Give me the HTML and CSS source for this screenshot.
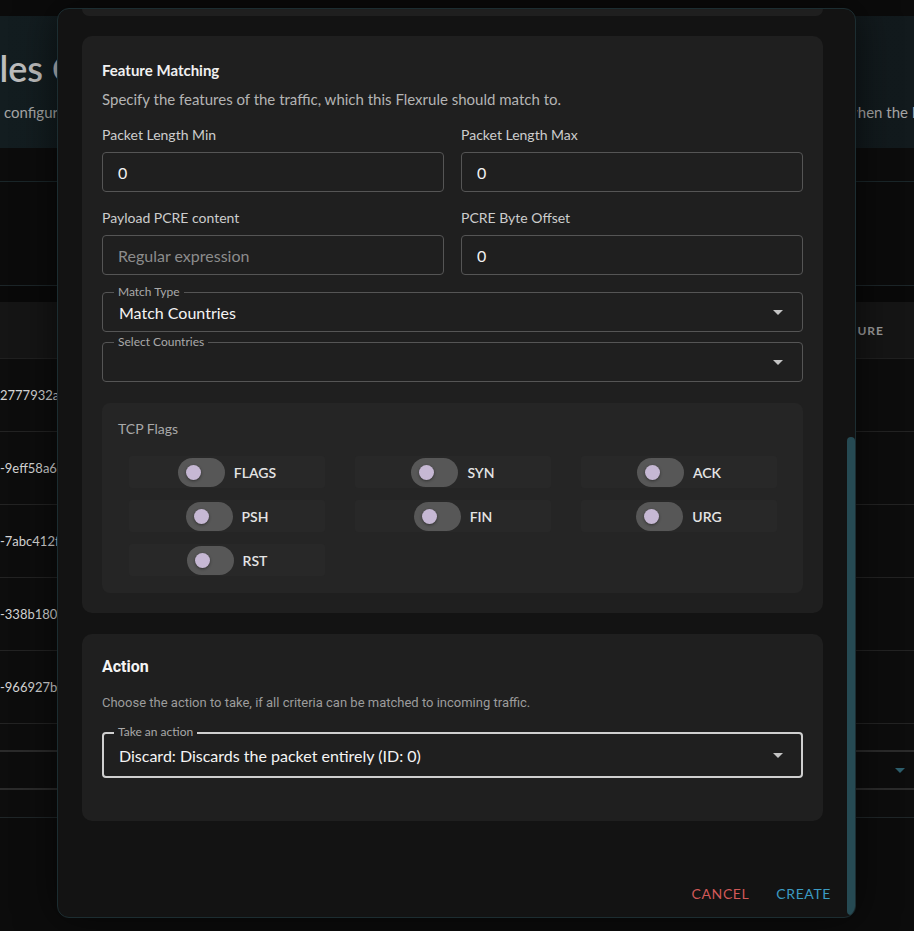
FILE: index.html
```html
<!DOCTYPE html>
<html lang="en">
<head>
<meta charset="utf-8">
<title>Create Flexrule</title>
<link rel="stylesheet" href="styles.css">
</head>
<body>
<div class="page">
  <div class="topgap"></div>
  <header class="banner">
    <h1 class="banner-title"><span class="banner-title-text">Flexrules Configuration</span></h1>
    <div class="banner-sub">
      <span class="sub-left">configure which traffic the Flexrules should match</span>
      <span class="sub-right"><span class="sub-right-text">when the Flexrule is triggered</span></span>
    </div>
  </header>
  <div class="band"></div>
  <div class="toolbar"></div>
  <div class="table-gap"></div>
  <div class="table-head"><span class="th-clip"><span class="th">FEATURE</span></span></div>
  <div class="trow"><span class="tid">2777932a-41c8-9e2f</span></div>
  <div class="trow"><span class="tid">-9eff58a6-77d1-40ab</span></div>
  <div class="trow"><span class="tid">-7abc412f-09e3-4c1d</span></div>
  <div class="trow"><span class="tid">-338b180c-5a2e-4f90</span></div>
  <div class="trow"><span class="tid">-966927b4-c3d8-41e7</span></div>
  <div class="tfoot">
    <div class="tfoot-top"></div>
    <div class="tfoot-select"><svg class="tcaret" viewBox="0 0 24 24"><path d="M7 10l5 5 5-5z"/></svg></div>
    <div class="tfoot-bottom"></div>
  </div>
</div>

<div class="dialog">
  <div class="dialog-content">
    <div class="card card-stub"></div>

    <section class="card feature">
      <h2 class="card-title">Feature Matching</h2>
      <p class="card-desc">Specify the features of the traffic, which this Flexrule should match to.</p>

      <div class="field-grid">
        <div class="field">
          <div class="field-label">Packet Length Min</div>
          <div class="input">0</div>
        </div>
        <div class="field">
          <div class="field-label">Packet Length Max</div>
          <div class="input">0</div>
        </div>
        <div class="field">
          <div class="field-label">Payload PCRE content</div>
          <div class="input placeholder">Regular expression</div>
        </div>
        <div class="field">
          <div class="field-label">PCRE Byte Offset</div>
          <div class="input">0</div>
        </div>
      </div>

      <div class="select select-first">
        <span class="legend">Match Type</span>
        <span class="select-value">Match Countries</span>
        <svg class="caret" viewBox="0 0 24 24"><path d="M7 10l5 5 5-5z"/></svg>
      </div>
      <div class="select select-next">
        <span class="legend">Select Countries</span>
        <span class="select-value"></span>
        <svg class="caret" viewBox="0 0 24 24"><path d="M7 10l5 5 5-5z"/></svg>
      </div>

      <div class="flags">
        <div class="flags-title">TCP Flags</div>
        <div class="flags-grid">
          <div class="flag-cell"><span class="switch"><span class="thumb"></span></span><span class="flag-label">FLAGS</span></div>
          <div class="flag-cell"><span class="switch"><span class="thumb"></span></span><span class="flag-label">SYN</span></div>
          <div class="flag-cell"><span class="switch"><span class="thumb"></span></span><span class="flag-label">ACK</span></div>
          <div class="flag-cell"><span class="switch"><span class="thumb"></span></span><span class="flag-label">PSH</span></div>
          <div class="flag-cell"><span class="switch"><span class="thumb"></span></span><span class="flag-label">FIN</span></div>
          <div class="flag-cell"><span class="switch"><span class="thumb"></span></span><span class="flag-label">URG</span></div>
          <div class="flag-cell"><span class="switch"><span class="thumb"></span></span><span class="flag-label">RST</span></div>
        </div>
      </div>
    </section>

    <section class="card action">
      <h2 class="action-title">Action</h2>
      <p class="action-desc">Choose the action to take, if all criteria can be matched to incoming traffic.</p>
      <div class="select select-focus">
        <span class="legend">Take an action</span>
        <span class="select-value">Discard: Discards the packet entirely (ID: 0)</span>
        <svg class="caret" viewBox="0 0 24 24"><path d="M7 10l5 5 5-5z"/></svg>
      </div>
    </section>
  </div>

  <div class="dialog-actions">
    <button class="btn btn-cancel">Cancel</button>
    <button class="btn btn-create">Create</button>
  </div>

  <div class="scroll-thumb"></div>
</div>
</body>
</html>
```

FILE: styles.css
```css
* {
  box-sizing: border-box;
  margin: 0;
  padding: 0;
}

html,
body {
  width: 914px;
  height: 931px;
  overflow: hidden;
}

body {
  position: relative;
  background: #0c0c0c;
  color: #e0e0e0;
  font-family: Lato, "Noto Sans", sans-serif;
}

/* ---------- background page ---------- */
.page {
  width: 914px;
}

.topgap {
  height: 16px;
  background: #0b0b0b;
}

.banner {
  height: 132px;
  padding-top: 30px;
  background: linear-gradient(90deg, #131d20 0%, #10181b 60%, #121a1d 100%);
  overflow: hidden;
}

.banner-title {
  width: 57px;
  overflow: hidden;
  font-size: 36px;
  font-weight: 600;
  line-height: 44px;
  color: #bdbdbd;
  white-space: nowrap;
}

.banner-title-text {
  display: block;
  margin-left: -100px;
}

.banner-sub {
  display: grid;
  grid-template-columns: 53px 57px;
  column-gap: 800px;
  margin-top: 12px;
  padding-left: 4px;
  font-size: 15px;
  line-height: 20px;
  color: #a6a6a6;
  white-space: nowrap;
  overflow: hidden;
}

.sub-left,
.sub-right {
  overflow: hidden;
}

.sub-right-text {
  display: block;
  margin-left: -11px;
}

.band {
  height: 34px;
  background: #0c0c0c;
  border-bottom: 1px solid #1a2629;
}

.toolbar {
  height: 104px;
  background: #0b0b0b;
  border-bottom: 1px solid #1c2528;
}

.table-gap {
  height: 16px;
  background: #090909;
}

.table-head {
  height: 57px;
  display: flex;
  align-items: center;
  padding-left: 857px;
  background: #151515;
  border-bottom: 1px solid #202020;
}

.th-clip {
  width: 57px;
  overflow: hidden;
  white-space: nowrap;
}

.th {
  display: block;
  margin-left: -32px;
  font-size: 12px;
  font-weight: 700;
  letter-spacing: 1px;
  color: #9a9a9a;
}

.trow {
  height: 73px;
  display: flex;
  align-items: center;
  background: #0d0d0d;
  border-bottom: 1px solid #232323;
}

.tid {
  width: 57px;
  overflow: hidden;
  font-size: 13px;
  color: #d6d6d6;
  white-space: nowrap;
}

.tfoot {
  background: #0d0d0d;
}

.tfoot-top {
  height: 26px;
}

.tfoot-select {
  height: 40px;
  display: flex;
  align-items: center;
  justify-content: flex-end;
  padding-right: 2px;
  border-top: 2px solid #2b2b2b;
  border-bottom: 2px solid #2b2b2b;
}

.tcaret {
  width: 24px;
  height: 24px;
  fill: #2d5e6c;
}

.tfoot-bottom {
  height: 28px;
  border-bottom: 1px solid #1f2628;
}

/* ---------- dialog ---------- */
.dialog {
  position: absolute;
  left: 57px;
  top: 8px;
  width: 799px;
  height: 910px;
  display: flex;
  flex-direction: column;
  background: #131313;
  border: 1px solid #1c2d31;
  border-radius: 12px;
  overflow: hidden;
  box-shadow: 0 0 40px rgba(0, 0, 0, 0.6);
}

.dialog-content {
  flex: 1;
  padding: 0 32px 0 24px;
  overflow: hidden;
}

.card {
  background: #1f1f1f;
  border-radius: 10px;
}

.card-stub {
  height: 7px;
  border-radius: 0 0 10px 10px;
}

.feature {
  margin-top: 20px;
  padding: 24px 20px 20px;
}

.card-title {
  font-size: 15px;
  font-weight: 700;
  line-height: 20px;
  color: #f0f0f0;
}

.card-desc {
  margin-top: 9px;
  font-size: 15px;
  line-height: 20px;
  color: #b4b4b4;
}

.field-grid {
  display: grid;
  grid-template-columns: 1fr 1fr;
  column-gap: 17px;
  row-gap: 17px;
  margin-top: 17px;
}

.field-label {
  font-size: 14px;
  line-height: 18px;
  color: #cdcdcd;
}

.input {
  height: 40px;
  margin-top: 8px;
  display: flex;
  align-items: center;
  padding-left: 15px;
  border: 1px solid #555555;
  border-radius: 4px;
  font-size: 16px;
  color: #f2f2f2;
}

.input.placeholder {
  color: #8c8c8c;
}

.select {
  position: relative;
  height: 40px;
  display: flex;
  align-items: center;
  padding-left: 16px;
  padding-right: 12px;
  border: 1px solid #555555;
  border-radius: 4px;
}

.select-first {
  margin-top: 17px;
}

.select-next {
  margin-top: 10px;
}

.legend {
  position: absolute;
  left: 11px;
  top: -8px;
  padding: 0 4px;
  background: #1f1f1f;
  font-size: 12px;
  line-height: 14px;
  color: #a9a9a9;
}

.select-value {
  flex: 1;
  padding-top: 1px;
  font-size: 16px;
  color: #f4f4f4;
  white-space: nowrap;
}

.caret {
  width: 24px;
  height: 24px;
  fill: #c4c4c4;
}

/* ---------- TCP flags ---------- */
.flags {
  margin-top: 21px;
  padding: 17px 16px 17px;
  background: #252525;
  border-radius: 8px;
}

.flags-title {
  font-size: 14px;
  line-height: 18px;
  color: #a9a9a9;
}

.flags-grid {
  display: grid;
  grid-template-columns: repeat(3, 196px);
  column-gap: 30px;
  row-gap: 12px;
  margin-top: 18px;
  padding-left: 11px;
}

.flag-cell {
  height: 32px;
  display: flex;
  align-items: center;
  justify-content: center;
  gap: 9px;
  background: #282828;
  border-radius: 3px;
}

.switch {
  width: 47px;
  height: 29px;
  display: flex;
  align-items: center;
  padding-left: 8px;
  background: #575757;
  border-radius: 15px;
}

.thumb {
  width: 15px;
  height: 15px;
  background: #c6b8d4;
  border-radius: 50%;
  box-shadow: 0 1px 3px rgba(0, 0, 0, 0.45);
}

.flag-label {
  font-size: 14px;
  font-weight: 600;
  color: #e4e4e4;
}

/* ---------- action ---------- */
.action {
  margin-top: 21px;
  padding: 23px 20px 43px;
}

.action-title {
  font-family: Roboto, sans-serif;
  font-size: 16px;
  font-weight: 700;
  line-height: 20px;
  color: #f4f4f4;
}

.action-desc {
  margin-top: 18px;
  font-family: Roboto, sans-serif;
  font-size: 13px;
  line-height: 16px;
  color: #9c9c9c;
}

.select-focus {
  height: 46px;
  margin-top: 21px;
  padding-left: 15px;
  padding-right: 11px;
  border: 2px solid #cfcfcf;
}

.select-focus .legend {
  left: 10px;
  top: -9px;
}

/* ---------- actions ---------- */
.dialog-actions {
  display: flex;
  justify-content: flex-end;
  gap: 11px;
  padding: 0 16px 6px;
}

.btn {
  height: 36px;
  padding: 0 8px;
  background: none;
  border: 0;
  font-family: Lato, "Noto Sans", sans-serif;
  font-size: 14px;
  letter-spacing: 0.6px;
  text-transform: uppercase;
}

.btn-cancel {
  color: #d05858;
}

.btn-create {
  color: #3b9ac2;
}

.scroll-thumb {
  position: absolute;
  right: 0;
  top: 428px;
  width: 8px;
  height: 478px;
  background: #264a53;
  border-radius: 4px;
}
```
